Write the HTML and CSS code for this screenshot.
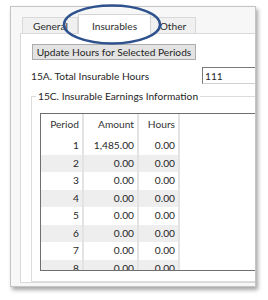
FILE: index.html
```html
<!DOCTYPE html>
<html lang="en">
<head>
  <meta charset="UTF-8">
  <title>Insurables</title>
  <link rel="stylesheet" href="styles.css">
</head>
<body>
  <div class="shot">
    <div class="window">
      <div class="tabs">
        <div class="tab tab-general">General</div>
        <div class="tab tab-active">Insurables</div>
        <div class="tab tab-other">Other</div>
      </div>
      <div class="panel">
        <button class="update-btn">Update Hours for Selected Periods</button>
        <div class="field-row">
          <label class="field-label">15A. Total Insurable Hours</label>
          <input class="field-input" type="text" value="111">
        </div>
        <fieldset class="group">
          <legend>15C. Insurable Earnings Information</legend>
          <div class="grid">
            <div class="grid-row grid-head">
              <div class="cell c-period">Period</div>
              <div class="cell c-amount">Amount</div>
              <div class="cell c-hours">Hours</div>
            </div>
            <div class="grid-row"><div class="cell c-period">1</div><div class="cell c-amount">1,485.00</div><div class="cell c-hours">0.00</div></div>
            <div class="grid-row alt"><div class="cell c-period">2</div><div class="cell c-amount">0.00</div><div class="cell c-hours">0.00</div></div>
            <div class="grid-row"><div class="cell c-period">3</div><div class="cell c-amount">0.00</div><div class="cell c-hours">0.00</div></div>
            <div class="grid-row alt"><div class="cell c-period">4</div><div class="cell c-amount">0.00</div><div class="cell c-hours">0.00</div></div>
            <div class="grid-row"><div class="cell c-period">5</div><div class="cell c-amount">0.00</div><div class="cell c-hours">0.00</div></div>
            <div class="grid-row alt"><div class="cell c-period">6</div><div class="cell c-amount">0.00</div><div class="cell c-hours">0.00</div></div>
            <div class="grid-row"><div class="cell c-period">7</div><div class="cell c-amount">0.00</div><div class="cell c-hours">0.00</div></div>
            <div class="grid-row alt"><div class="cell c-period">8</div><div class="cell c-amount">0.00</div><div class="cell c-hours">0.00</div></div>
          </div>
        </fieldset>
      </div>
    </div>
    <svg class="highlight" width="268" height="60" viewBox="0 0 268 60">
      <ellipse cx="112" cy="24.5" rx="48" ry="19" fill="none" stroke="#2f528f" stroke-width="2.5"/>
    </svg>
  </div>
</body>
</html>
```

FILE: styles.css
```css
* {
  margin: 0;
  padding: 0;
  box-sizing: border-box;
}

body {
  width: 268px;
  height: 300px;
  background: #fff;
  font-family: Lato, 'Noto Sans', sans-serif;
  font-size: 10.2px;
  color: #1f1f1f;
  overflow: hidden;
}

.shot {
  position: relative;
  width: 268px;
  height: 300px;
  padding: 6px 0 0 10px;
}

.window {
  width: 246px;
  height: 281px;
  border: 1px solid #c4c4c4;
  background: #f7f7f7;
  box-shadow: 2px 3px 4px rgba(0, 0, 0, 0.35);
  padding: 10px 0 0 9px;
  overflow: hidden;
}

/* tab strip */
.tabs {
  display: flex;
  align-items: flex-end;
  height: 16px;
  margin-left: 2px;
  position: relative;
  z-index: 2;
}

.tab {
  height: 16px;
  line-height: 17px;
  background: #f0f0f0;
  border: 1px solid #d9d9d9;
  border-bottom: none;
  text-align: center;
  color: #2b2b2b;
  white-space: nowrap;
  overflow: hidden;
}

.tab-general {
  width: 56px;
  text-align: left;
  padding-left: 10px;
}

.tab-active {
  width: 73px;
  height: 20px;
  line-height: 23px;
  background: #fff;
  margin-bottom: -1px;
  border-color: #d4d4d4;
}

.tab-other {
  width: 45px;
  border-left: none;
}

/* panel */
.panel {
  width: 300px;
  height: 250px;
  background: #fff;
  border: 1px solid #d9d9d9;
  padding: 10px 0 0 11px;
}

.update-btn {
  display: block;
  width: 164px;
  height: 16px;
  font-family: inherit;
  font-size: 10.2px;
  line-height: 13px;
  color: #1f1f1f;
  background: #e3e3e3;
  border: 1px solid #adadad;
  text-align: center;
  white-space: nowrap;
}

.field-row {
  display: flex;
  align-items: center;
  margin-top: 7px;
  height: 17px;
}

.field-label {
  width: 171px;
  flex: none;
  margin-left: -1px;
  white-space: nowrap;
}

.field-input {
  width: 80px;
  height: 17px;
  font-family: inherit;
  font-size: 10.2px;
  color: #1f1f1f;
  padding-left: 2px;
  border: 1px solid #7a7a7a;
  border-bottom-color: #d0d0d0;
  outline: none;
}

/* group box */
.group {
  margin: 5px 0 0 -1px;
  width: 280px;
  height: 193px;
  border: 1px solid #dcdcdc;
  padding: 10px 0 0 8px;
}

.group legend {
  margin-left: -4px;
  padding: 0 2px;
  line-height: 14px;
  white-space: nowrap;
}

.grid {
  height: 158px;
  border: 1px solid #6f6f6f;
  background: #fff;
  overflow: hidden;
}

.grid-row {
  display: flex;
  height: 17.5px;
  line-height: 17.5px;
}

.grid-head {
  height: 23px;
  line-height: 21px;
  color: #333;
}

.grid-row.alt .cell {
  background: #eeeeee;
}

.cell {
  text-align: right;
  padding-right: 3px;
  border-right: 2px solid #e3e3e3;
}

.c-period {
  width: 43px;
}

.c-amount {
  width: 55px;
}

.c-hours {
  width: 41px;
}

.highlight {
  position: absolute;
  left: 0;
  top: 0;
  z-index: 5;
}
```
